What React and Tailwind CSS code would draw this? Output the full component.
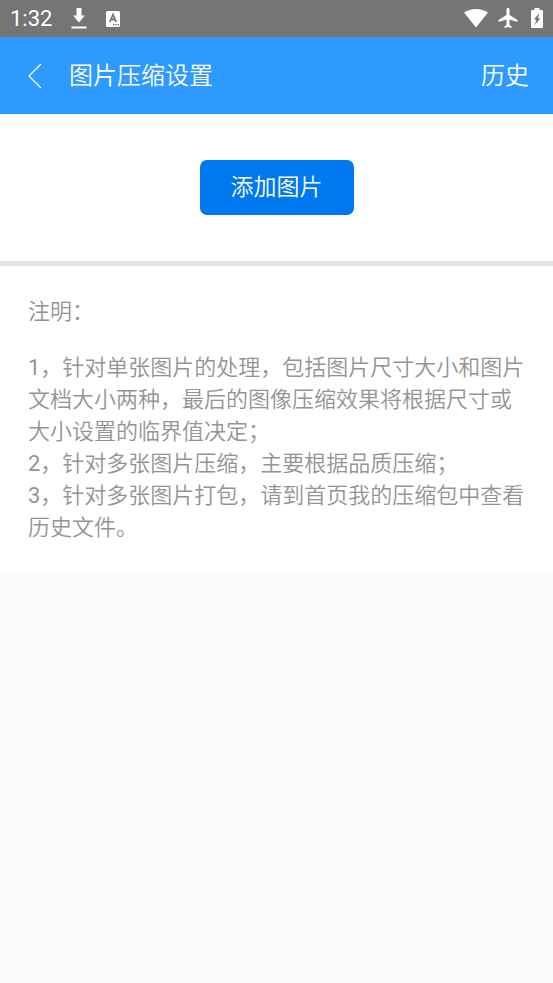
const StatusBar = () => {
  return (
    <div className="flex h-[37px] items-center justify-between bg-[#757575] px-[10px] text-white">
      <div className="flex items-center">
        <span className="text-[22px] leading-6">1:32</span>
        <svg viewBox="0 0 16 21" className="ml-[19px] h-[21px] w-4" fill="currentColor" aria-hidden="true">
          <path d="M5.500 0h5v7.500H14L8 14.500 2 7.500h3.500z" />
          <path d="M0.500 18.500h15v2h-15z" />
        </svg>
        <svg viewBox="0 0 16 18" className="ml-[18px] h-[18px] w-4" aria-hidden="true">
          <rect x="1" y="1" width="14" height="16" rx="1.500" fill="#fff" />
          <path d="M4.800 12 8 4.500 11.200 12M6 9.500h4" fill="none" stroke="#757575" strokeWidth="1.800" />
          <path d="M8 14h1.500v1.200H8zM10.300 14h1.500v1.200h-1.500zM12.600 14h1.500v1.200h-1.500z" fill="#757575" />
        </svg>
      </div>
      <div className="flex items-center pb-px">
        <svg viewBox="0 0 24 19" className="h-[19px] w-6" fill="currentColor" aria-hidden="true">
          <path d="M12 18.500 0 3.600C3.500 1.200 7.500 0 12 0s8.500 1.200 12 3.600z" />
        </svg>
        <svg viewBox="2 2 19 20" className="ml-[10px] h-5 w-5" fill="currentColor" aria-hidden="true">
          <path d="M21 16v-2l-8-5V3.500c0-.83-.67-1.500-1.500-1.500S10 2.670 10 3.500V9l-8 5v2l8-2.500V19l-2 1.500V22l3.500-1 3.500 1v-1.500L13 19v-5.500l8 2.500z" />
        </svg>
        <svg viewBox="0 0 12 20" className="ml-[13px] h-5 w-3" fill="currentColor" aria-hidden="true">
          <path
            fillRule="evenodd"
            d="M3.500 0h5v2H11a1 1 0 0 1 1 1v16a1 1 0 0 1-1 1H1a1 1 0 0 1-1-1V3a1 1 0 0 1 1-1h2.500zM8.500 5 2.800 11.500h2.500L3.800 17 9.400 10.200H6.900z"
          />
        </svg>
      </div>
    </div>
  )
}

const Header = () => {
  return (
    <header className="flex h-[77px] items-center bg-[#2e99ff] pl-7 pr-6 text-white">
      <button type="button" aria-label="返回" className="flex">
        <svg viewBox="0 0 14 26" className="h-[26px] w-[14px]" fill="none" stroke="currentColor" strokeWidth="1.200" aria-hidden="true">
          <path d="M13 1 1 13l12 12" />
        </svg>
      </button>
      <h1 className="ml-[27px] text-2xl">图片压缩设置</h1>
      <button type="button" className="ml-auto text-2xl">历史</button>
    </header>
  )
}

const notes = [
  "1，针对单张图片的处理，包括图片尺寸大小和图片文档大小两种，最后的图像压缩效果将根据尺寸或大小设置的临界值决定；",
  "2，针对多张图片压缩，主要根据品质压缩；",
  "3，针对多张图片打包，请到首页我的压缩包中查看历史文件。",
]

const App = () => {
  return (
    <div className="min-h-screen bg-[#fafafa] font-['Roboto','Noto_Sans_CJK_SC_DemiLight','Noto_Sans_CJK_SC',sans-serif]">
      <StatusBar />
      <Header />
      <main className="bg-white">
        <section className="flex justify-center border-b-[5px] border-[#e3e3e3] py-[46px]">
          <button type="button" className="rounded-[7px] bg-[#0078f0] px-[31px] py-3 text-[23px] leading-[31px] text-white">
            添加图片
          </button>
        </section>
        <section className="px-7 pb-7 pt-[30px] text-[22px] leading-8 text-[#949494]">
          <h2>注明：</h2>
          <div className="mt-6">
            {notes.map((note) => (
              <p key={note}>{note}</p>
            ))}
          </div>
        </section>
      </main>
    </div>
  )
}

export default App
